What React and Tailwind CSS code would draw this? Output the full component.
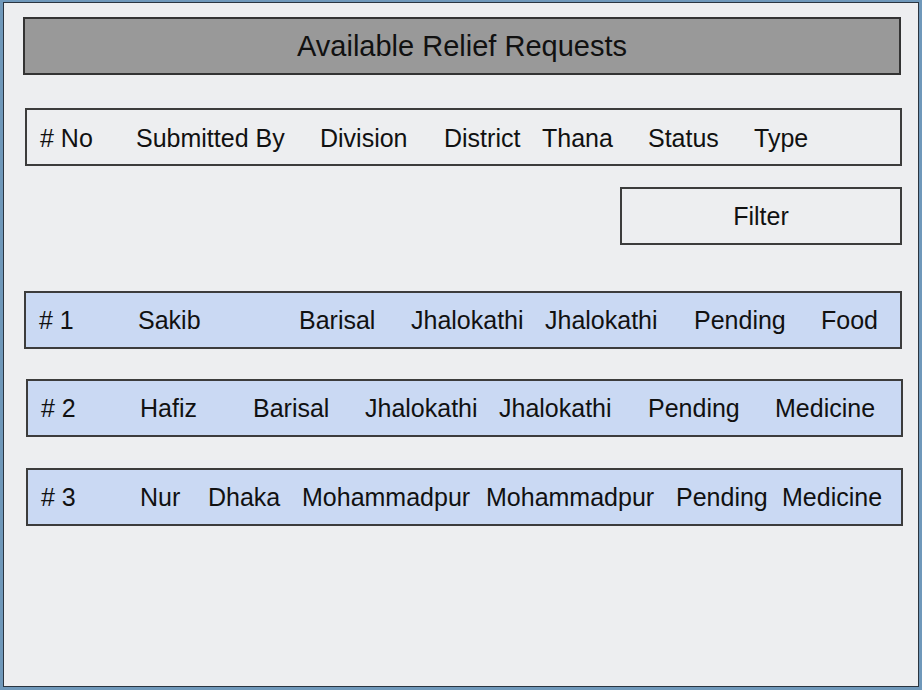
import React from 'react';

const HEADER = [
    ['# No', 'w-[96px]'],
    ['Submitted By', 'w-[184px]'],
    ['Division', 'w-[124px]'],
    ['District', 'w-[98px]'],
    ['Thana', 'w-[106px]'],
    ['Status', 'w-[106px]'],
    ['Type', ''],
];

const ROWS = [
    {
        id: 1,
        box: 'ml-[20px] w-[878px] mt-[46px]',
        cells: [
            ['# 1', 'w-[99px]'],
            ['Sakib', 'w-[161px]'],
            ['Barisal', 'w-[112px]'],
            ['Jhalokathi', 'w-[134px]'],
            ['Jhalokathi', 'w-[149px]'],
            ['Pending', 'w-[127px]'],
            ['Food', ''],
        ],
    },
    {
        id: 2,
        box: 'ml-[22px] w-[877px] mt-[30px]',
        cells: [
            ['# 2', 'w-[99px]'],
            ['Hafiz', 'w-[113px]'],
            ['Barisal', 'w-[112px]'],
            ['Jhalokathi', 'w-[134px]'],
            ['Jhalokathi', 'w-[149px]'],
            ['Pending', 'w-[127px]'],
            ['Medicine', ''],
        ],
    },
    {
        id: 3,
        box: 'ml-[22px] w-[877px] mt-[31px]',
        cells: [
            ['# 3', 'w-[99px]'],
            ['Nur', 'w-[68px]'],
            ['Dhaka', 'w-[94px]'],
            ['Mohammadpur', 'w-[184px]'],
            ['Mohammadpur', 'w-[190px]'],
            ['Pending', 'w-[106px]'],
            ['Medicine', ''],
        ],
    },
];

const Cells = ({ cells }) => (
    <>
        {cells.map(([text, w], i) => (
            <span key={i} className={`${w} shrink-0 whitespace-nowrap`}>{text}</span>
        ))}
    </>
);

export default function App() {
    return (
        <div className="w-[922px] h-[690px] border-[3px] border-t-2 border-[#6f98ba] font-['Liberation_Sans',Arial,sans-serif] text-[#111]">
            <div className="w-full h-full border border-[#2a3540] bg-[#edeef0] flex flex-col">
                {/* Title */}
                <div className="ml-[19px] mt-[14px] w-[878px] h-[58px] bg-[#999999] border-2 border-[#333] flex items-center justify-center pt-[2px] text-[29px]">
                    Available Relief Requests
                </div>

                {/* Column headings */}
                <div className="ml-[21px] mt-[33px] w-[877px] h-[58px] border-2 border-[#3c3c3c] flex items-center pl-[13px] pt-[3px] text-[25px]">
                    <Cells cells={HEADER} />
                </div>

                {/* Filter */}
                <div className="ml-[616px] mt-[21px] w-[282px] h-[58px] border-2 border-[#3c3c3c] flex items-center justify-center pt-[2px] text-[25px]">
                    Filter
                </div>

                {/* Requests */}
                {ROWS.map(row => (
                    <div key={row.id} className={`${row.box} h-[58px] bg-[#cad9f3] border-2 border-[#3c3c3c] flex items-center pl-[13px] pt-[2px] text-[25px]`}>
                        <Cells cells={row.cells} />
                    </div>
                ))}
            </div>
        </div>
    );
}
